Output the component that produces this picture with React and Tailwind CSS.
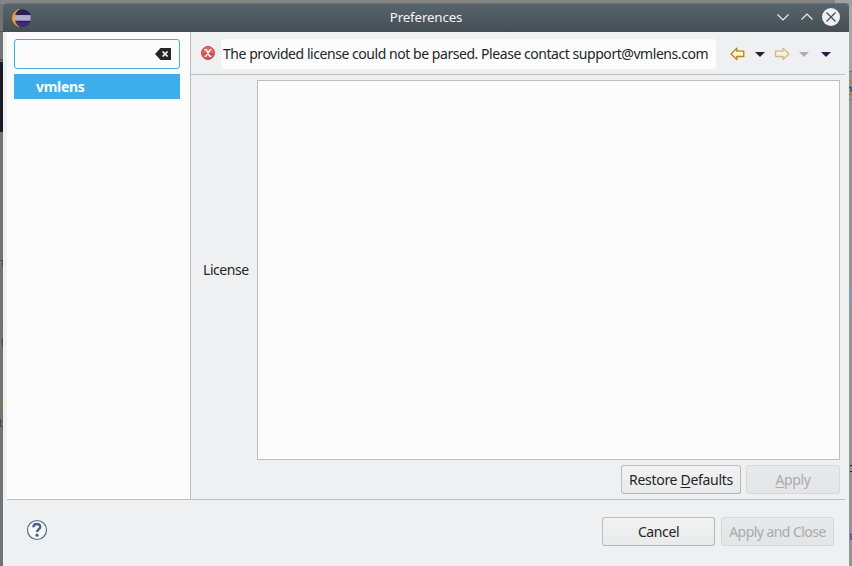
import React from "react";

function EclipseLogo() {
  return (
    <svg width="21" height="20" viewBox="0 0 21 20" className="-mt-px shrink-0">
      <circle cx="11.5" cy="10" r="8.7" fill="#2b1f55" />
      <path d="M3.8 14h15.400a8.700 8.700 0 0 1-15.400 0z" fill="#3a2c78" />
      <path d="M2.800 7h16.800v5.800H2.800z" fill="#aaa2c4" />
      <path d="M2.800 9h17M2.800 11h17" stroke="#c6bfd8" strokeWidth="0.6" />
      <path d="M8 1.200C-1 4.500-1 15.500 8 18.800 1.800 14.500 1.800 5.500 8 1.200z" fill="#f39a2d" stroke="#f39a2d" strokeWidth="0.6" />
    </svg>
  );
}

function TitleBar() {
  return (
    <header className="flex h-[29px] shrink-0 items-center rounded-t-[3px] border-t border-[#65717a] bg-linear-to-b from-[#58646c] to-[#454e54] pr-[9px] pl-2">
      <div className="flex flex-1"><EclipseLogo /></div>
      <h1 className="-mt-[2px] pl-px text-[13.33px] leading-5 tracking-[-0.15px] text-[#f4f5f5]">Preferences</h1>
      <div className="flex flex-1 items-center justify-end">
        <svg width="64" height="20" viewBox="0 0 64 20" fill="none" className="-mt-[2px] shrink-0">
          <path d="M1.5 7.5 7 13l5.5-5.5M25.5 12.5 31 7l5.5 5.5" stroke="#f4f5f5" strokeWidth="1.1" />
          <circle cx="55" cy="10" r="9" fill="#eff0f1" />
          <path d="m50.5 5.5 9 9m0-9-9 9" stroke="#414a50" strokeWidth="1.2" />
        </svg>
      </div>
    </header>
  );
}

function Sidebar() {
  return (
    <aside className="w-[184px] shrink-0 border-r border-[#bcbebf] bg-[#fcfcfc] pt-[7px] pl-[7px]">
      <div className="flex h-[30px] w-[166px] items-center justify-end rounded-[3px] border border-[#3daee9] pr-2">
        <svg width="16" height="12" viewBox="0 0 16 12">
          <path d="M0 6 5.5 0H16v12H5.5z" fill="#232629" />
          <path d="m7.6 3.5 5 5m0-5-5 5" stroke="#fcfcfc" strokeWidth="1.7" />
        </svg>
      </div>
      <div className="mt-[5px] flex h-[25px] w-[166px] items-center bg-[#3daee9] pl-[22px] text-[14px] font-bold tracking-[-0.3px] text-[#fcfcfc]">
        vmlens
      </div>
    </aside>
  );
}

function ErrorIcon() {
  return (
    <svg width="14" height="14" viewBox="0 0 14 14" className="shrink-0">
      <circle cx="7" cy="7" r="6.5" fill="#e0686a" stroke="#c9444a" />
      <path d="M1.5 7h11a5.5 5.5 0 0 1-11 0z" fill="#d24d52" />
      <path d="M3.600 3.700h1.700l3.300 6.600h1.700M10.200 3.700H9.300L4.800 10.300H3.600" fill="none" stroke="#fff" strokeWidth="1.5" />
    </svg>
  );
}

function NavArrows() {
  return (
    <svg width="102" height="14" viewBox="0 0 102 14" className="shrink-0">
      <defs>
        <linearGradient id="gold" x1="0" y1="0" x2="0" y2="1">
          <stop offset="0.3" stopColor="#fffdf3" />
          <stop offset="1" stopColor="#ffe27b" />
        </linearGradient>
      </defs>
      <path d="M1 7 6.8 1.3v2.9h7v5.3h-7v3.1z" fill="url(#gold)" stroke="#b9811c" strokeWidth="1.3" strokeLinejoin="round" />
      <path d="M25 5h10l-5 5z" fill="#232629" />
      <path d="M58.8 7 53 1.3v2.9h-7.5v5.3H53v3.1z" fill="url(#gold)" stroke="#b9811c" strokeWidth="1.3" strokeLinejoin="round" opacity="0.5" />
      <path d="M69 5h10l-5 5z" fill="#aeb0b2" />
      <path d="M91 5h10l-5 5z" fill="#30184f" />
    </svg>
  );
}

function Button({ children, className, disabled }) {
  const look = disabled
    ? "border-[#d5d7d8] bg-linear-to-b from-[#e7e9ea] to-[#e3e5e6] text-[#a9abad]"
    : "border-[#bcbebf] border-r-[#b4b7b9] border-b-[#b4b7b9] bg-linear-to-b from-[#f2f2f2] to-[#e9eaeb] text-[#232629]";
  return (
    <button disabled={disabled} className={`flex h-[29px] items-center justify-center rounded-[3px] border text-[14px] whitespace-nowrap ${look} ${className}`}>
      {children}
    </button>
  );
}

function BackgroundFragments() {
  return (
    <svg width="852" height="566" className="absolute inset-0" aria-hidden="true">
      <rect width="852" height="4" fill="#858585" />
      <rect y="4" width="3" height="562" fill="#717374" />
      <rect y="31" width="3" height="1" fill="#505253" />
      <rect y="59" width="3" height="2" fill="#565859" />
      <rect y="62" width="3" height="70" fill="#1c1b25" />
      <rect x="849" width="3" height="566" fill="#929495" />
      <rect x="835" width="17" height="3" fill="#a0a1a1" />
      <rect x="849" y="4" width="3" height="67" fill="#a5a6a6" />
      <rect x="849" y="71" width="3" height="1" fill="#77797a" />
      <path d="M849 80.5h2v3" stroke="#a98336" fill="none" />
      <path d="M849 87.5h2v4.5" stroke="#254a82" strokeWidth="1.3" fill="none" />
      <path d="M849 94.5h3" stroke="#89753c" />
      <path d="M849 99.5h3" stroke="#747677" />
      <rect x="849" y="289" width="3" height="17" fill="#869aa7" />
      <path d="M850 465.5h2M850 471.5h2" stroke="#29231f" />
      <path d="M852 534h-1.5v3h1.5v2h-2" stroke="#4a359c" fill="none" />
      <path d="M0 240.5h3" stroke="#8b7546" />
      <path d="M0 260.5h2.5v6.5" stroke="#484c55" fill="none" />
      <path d="M2.5 320v12" stroke="#8b6444" />
      <path d="M3 338.5h-.5v8.5M1 341.5h2" stroke="#484a50" fill="none" />
      <path d="M0 401.5h2.5v7.5H0M0 404.5h2" stroke="#8b7546" fill="none" />
      <path d="M.5 419v7.5H3M0 421.5h3" stroke="#484a50" fill="none" />
    </svg>
  );
}

export default function App() {
  return (
    <div className="relative h-[566px] w-[852px] overflow-hidden bg-[#858585] px-[3px] pt-[3px] font-['Noto_Sans',sans-serif] text-[14px] text-[#232629]">
      <BackgroundFragments />
      <div className="relative flex h-[563px] flex-col rounded-t-[3px] bg-[#eff0f1]">
        <TitleBar />
        <div className="mx-1 flex h-[468px] border-b border-[#bcbebf]">
          <Sidebar />
          <main className="flex min-w-0 flex-1 flex-col">
            <div className="flex h-[43px] shrink-0 items-center border-b border-[#bcbebf] pl-[10px]">
              <ErrorIcon />
              <div className="mt-px ml-[6px] flex h-[30px] w-[495px] items-center rounded-[3px] bg-[#fcfcfc] pb-px pl-[2px] tracking-[-0.45px] whitespace-nowrap">
                The provided license could not be parsed. Please contact support@vmlens.com
              </div>
              <div className="mt-px ml-[14px]"><NavArrows /></div>
            </div>
            <div className="mt-[5px] mr-[5px] flex h-[380px]">
              <label htmlFor="license" className="flex w-[66px] items-center pb-px pl-3 tracking-[-0.45px]">License</label>
              <textarea id="license" className="flex-1 resize-none border border-[#bcbebf] bg-[#fcfcfc] outline-none" />
            </div>
            <div className="mt-[5px] mr-[5px] flex justify-end gap-[5px]">
              <Button className="w-[120px] tracking-[-0.3px]"><span>Restore <u className="underline-offset-2">D</u>efaults</span></Button>
              <Button className="w-[94px] tracking-[-0.4px]" disabled><span><u className="underline-offset-2">A</u>pply</span></Button>
            </div>
          </main>
        </div>
        <footer className="flex flex-1 items-start justify-between pt-[17px] pr-[15px] pl-[23px]">
          <svg width="22" height="22" viewBox="0 0 22 22" className="mt-[2px]">
            <circle cx="11" cy="11" r="9.5" fill="#f7f8f9" stroke="#586d8e" strokeWidth="1.2" />
            <path d="M7.4 8.3C7.6 4 14.5 4.2 14.2 8c-.2 2.4-3.1 2.5-3.1 5" fill="none" stroke="#4b6288" strokeWidth="2.5" />
            <circle cx="11" cy="16.2" r="1.6" fill="#4b6288" />
          </svg>
          <div className="flex gap-[6px]">
            <Button className="w-[113px] tracking-[-0.4px]">Cancel</Button>
            <Button className="w-[113px] tracking-[-0.55px]" disabled>Apply and Close</Button>
          </div>
        </footer>
      </div>
    </div>
  );
}
